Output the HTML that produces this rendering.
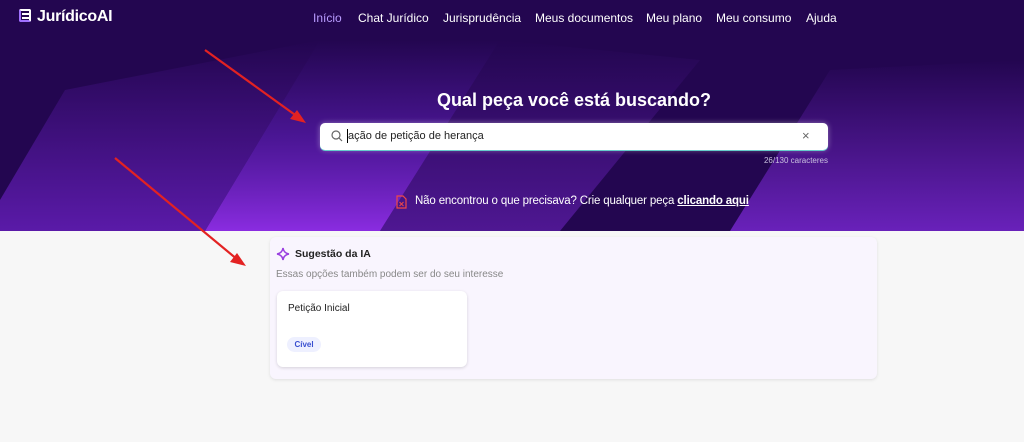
<!DOCTYPE html>
<html><head><meta charset="utf-8"><style>
*{margin:0;padding:0;box-sizing:border-box}
body{width:1024px;height:442px;overflow:hidden;background:#f7f7f7;font-family:"Liberation Sans",sans-serif;position:relative}
.hero{position:absolute;left:0;top:0;width:1024px;height:231px;background:#230650;overflow:hidden}
.abs{position:absolute}
.nav a{position:absolute;top:11px;color:#fff;font-size:12px;white-space:nowrap}
</style></head><body>
<div class="hero">
<svg width="1024" height="231" style="position:absolute;left:0;top:0">
<defs>
<linearGradient id="g1" x1="0" y1="0" x2="0" y2="1"><stop offset="0" stop-color="#5a1aa8" stop-opacity="0"/><stop offset="1" stop-color="#5a1aa8"/></linearGradient>
<linearGradient id="g2" x1="0" y1="0" x2="0" y2="1"><stop offset="0" stop-color="#5a1cb0" stop-opacity="0"/><stop offset="0.5" stop-color="#5a1cb0" stop-opacity="0.7"/><stop offset="1" stop-color="#8a2ce0"/></linearGradient>
<linearGradient id="g3" x1="0" y1="0" x2="0" y2="1"><stop offset="0" stop-color="#7a28d4" stop-opacity="0"/><stop offset="1" stop-color="#7a28d4"/></linearGradient>
</defs>
<polygon points="0,200 65,90 320,40 205,231 0,231" fill="url(#g1)"/>
<polygon points="205,231 320,40 500,40 380,231" fill="url(#g2)"/>
<polygon points="380,231 500,40 700,60 560,231" fill="url(#g3)" opacity="0.5"/>
<polygon points="730,231 830,70 1024,60 1024,231" fill="url(#g3)" opacity="0.8"/>
</svg>
<div class="abs" style="left:19px;top:9px;width:12px;height:13px;border:2px solid #fff;border-left-color:#a070ff;border-bottom-color:#a070ff;border-radius:2px"></div>
<div class="abs" style="left:22px;top:13px;width:7px;height:2px;background:#fff"></div>
<div class="abs" style="left:22px;top:17px;width:7px;height:2px;background:#fff"></div>
<div class="abs" style="left:37px;top:8px;color:#fff;font-size:16px;font-weight:bold;letter-spacing:-0.3px">JurídicoAI</div>
<div class="nav">
<a style="left:313px;color:#b99cff">Início</a>
<a style="left:358px">Chat Jurídico</a>
<a style="left:443px">Jurisprudência</a>
<a style="left:535px">Meus documentos</a>
<a style="left:646px">Meu plano</a>
<a style="left:716px">Meu consumo</a>
<a style="left:806px">Ajuda</a>
</div>
<div class="abs" style="left:320px;top:90px;width:508px;text-align:center;color:#fff;font-size:18px;font-weight:bold">Qual peça você está buscando?</div>
<div class="abs" style="left:320px;top:123px;width:508px;height:27px;background:#fff;border-radius:5px;box-shadow:0 1px 0 #6cc,0 0 6px rgba(255,255,255,.4)"></div>
<svg class="abs" style="left:331px;top:130px" width="12" height="12"><circle cx="5" cy="5" r="4" fill="none" stroke="#666" stroke-width="1.2"/><line x1="8" y1="8" x2="11" y2="11" stroke="#666" stroke-width="1.2"/></svg>
<div class="abs" style="left:347px;top:129px;width:1px;height:14px;background:#000"></div>
<div class="abs" style="left:348px;top:130px;font-size:11px;color:#222">ação de petição de herança</div>
<div class="abs" style="left:802px;top:128px;font-size:13px;color:#666">×</div>
<div class="abs" style="left:700px;top:156px;width:128px;text-align:right;font-size:8px;color:#c9c0e0">26/130 caracteres</div>
<svg class="abs" style="left:396px;top:195px" width="11" height="14"><path d="M1 1h6l3 3v9H1z" fill="none" stroke="#f04848" stroke-width="1.2"/><path d="M3.5 7l4 4M7.5 7l-4 4" stroke="#f04848" stroke-width="1"/></svg>
<div class="abs" style="left:415px;top:195px;font-size:11.5px;color:#fff;letter-spacing:-0.15px">Não encontrou o que precisava? Crie qualquer peça <span style="text-decoration:underline;font-weight:bold">clicando aqui</span></div>
</div>
<div class="abs" style="left:270px;top:237px;width:607px;height:142px;background:#f9f5fe;border-radius:6px;box-shadow:0 1px 3px rgba(0,0,0,.1)"></div>
<svg class="abs" style="left:276px;top:247px" width="14" height="14"><path d="M7 1Q7.8 6.2 13 7Q7.8 7.8 7 13Q6.2 7.8 1 7Q6.2 6.2 7 1Z" fill="none" stroke="#9a3fe0" stroke-width="1.5"/></svg>
<div class="abs" style="left:295px;top:248px;font-size:10.5px;font-weight:bold;color:#222">Sugestão da IA</div>
<div class="abs" style="left:276px;top:269px;font-size:10px;color:#888">Essas opções também podem ser do seu interesse</div>
<div class="abs" style="left:277px;top:291px;width:190px;height:76px;background:#fff;border-radius:6px;box-shadow:0 1px 3px rgba(0,0,0,.15)"></div>
<div class="abs" style="left:288px;top:303px;font-size:10px;color:#222">Petição Inicial</div>
<div class="abs" style="left:287px;top:337px;width:34px;height:15px;background:#eef0ff;border-radius:8px;color:#3a50d0;font-size:8px;font-weight:bold;text-align:center;line-height:15px">Cível</div>
<svg class="abs" style="left:0;top:0" width="1024" height="442">
<g stroke="#e32222" stroke-width="2.2" fill="#e32222">
<line x1="205" y1="50" x2="298" y2="117"/><polygon points="306,123 290,119 297,110" stroke="none"/>
<line x1="115" y1="158" x2="238" y2="260"/><polygon points="246,266 230,262 237,253" stroke="none"/>
</g></svg>
</body></html>
